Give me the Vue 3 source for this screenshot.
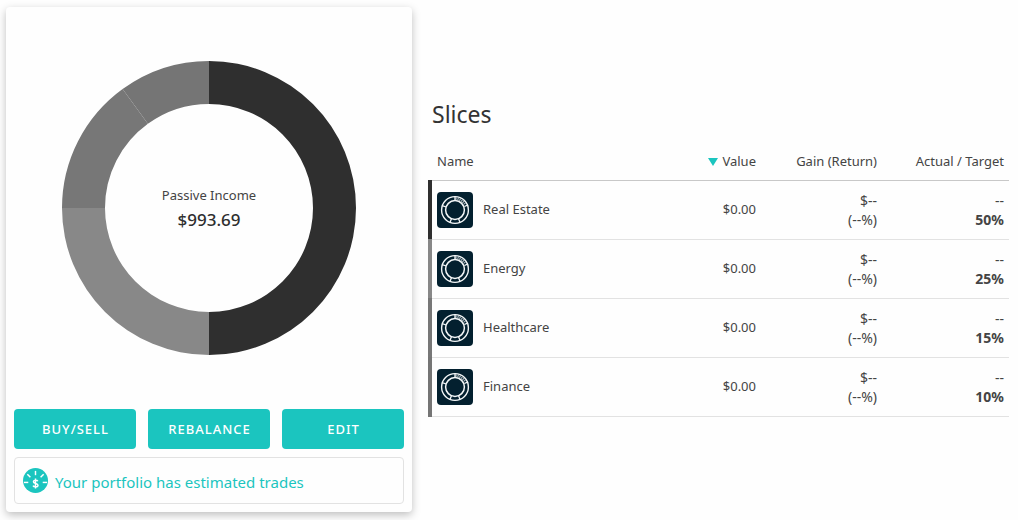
<script setup>
const slices = [
  { name: 'Real Estate', target: 50, tone: 'tone-a' },
  { name: 'Energy', target: 25, tone: 'tone-b' },
  { name: 'Healthcare', target: 15, tone: 'tone-c' },
  { name: 'Finance', target: 10, tone: 'tone-d' },
]

const OUTER = 147
const INNER = 104

function point(radius, share) {
  const angle = (share / 100) * Math.PI * 2
  return `${(Math.sin(angle) * radius).toFixed(2)} ${(-Math.cos(angle) * radius).toFixed(2)}`
}

let start = 0
const arcs = slices.map((slice) => {
  const from = start
  const to = start + slice.target
  start = to
  return {
    tone: slice.tone,
    d: `M${point(OUTER, from)}A${OUTER} ${OUTER} 0 0 1 ${point(OUTER, to)}L${point(INNER, to)}A${INNER} ${INNER} 0 0 0 ${point(INNER, from)}Z`,
  }
})

const actions = ['BUY/SELL', 'REBALANCE', 'EDIT']
const rays = [-90, -45, 0, 45, 90]
</script>

<template>
  <main class="page">
    <section class="card">
      <div class="chart">
        <svg class="donut" viewBox="-147 -147 294 294" aria-hidden="true">
          <path v-for="arc in arcs" :key="arc.tone" :class="arc.tone" :d="arc.d" />
        </svg>
        <div class="center">
          <span class="center-label">Passive Income</span>
          <strong class="center-value">$993.69</strong>
        </div>
      </div>
      <div class="actions">
        <button v-for="action in actions" :key="action" type="button">{{ action }}</button>
      </div>
      <a class="notice" href="#">
        <svg class="notice-icon" viewBox="0 0 26 26" aria-hidden="true">
          <circle cx="13" cy="13" r="13" fill="#1bc5bf" />
          <g stroke="#fff" stroke-width="1.5">
            <path v-for="ray in rays" :key="ray" d="M13 3V7.5" :transform="`rotate(${ray} 13 15)`" />
          </g>
          <path d="M15.4 13.8C14.8 12.4 10.8 12.2 10.8 14.4C10.8 16.6 15.6 15.6 15.6 17.9C15.6 20.1 11.2 20 10.4 18.4M13 11V21.4" fill="none" stroke="#fff" stroke-width="1.5" />
        </svg>
        <span>Your portfolio has estimated trades</span>
      </a>
    </section>

    <section class="slices">
      <h1>Slices</h1>
      <table>
        <thead>
          <tr>
            <th class="col-name">Name</th>
            <th class="col-value">
              <svg class="sort" viewBox="0 0 10 8" aria-hidden="true"><path d="M0 0H10L5 8Z" fill="#1bc5bf" /></svg>Value
            </th>
            <th class="col-gain">Gain (Return)</th>
            <th class="col-target">Actual / Target</th>
          </tr>
        </thead>
        <tbody>
          <tr v-for="slice in slices" :key="slice.name">
            <td class="name-cell">
              <span class="bar" :class="slice.tone"></span>
              <div class="name">
                <svg class="pie-icon" viewBox="0 0 36 36" aria-hidden="true">
                  <rect width="36" height="36" rx="4" fill="#03202f" />
                  <g fill="none" stroke="#f4f7f8">
                    <circle cx="18" cy="18" r="13.4" stroke-width="1.4" />
                    <circle cx="18" cy="18" r="9.4" stroke-width="1.5" />
                    <path d="M5.2 13.7L9.2 15M13 30.4L14.4 26.7M23 30.4L21.6 26.7M27.4 14.5L31 12.8M18 4.5V8.5" stroke-width="1.3" />
                    <path d="M18.5 6.6A11.4 11.4 0 0 1 28 12.5" stroke-width="2.4" stroke-dasharray="1.2 0.8" opacity="0.7" />
                  </g>
                </svg>
                {{ slice.name }}
              </div>
            </td>
            <td>$0.00</td>
            <td class="stacked">$--<br />(--%)</td>
            <td class="stacked">--<br /><strong>{{ slice.target }}%</strong></td>
          </tr>
        </tbody>
      </table>
    </section>
  </main>
</template>

<style>
body {
  margin: 0;
  background: #fefefe;
}
</style>

<style scoped>
.page {
  display: grid;
  grid-template-columns: 406fr 581fr;
  gap: 16px;
  align-items: center;
  padding: 7px 9px 8px 6px;
  font-family: "Segoe UI", "Noto Sans", "Open Sans", sans-serif;
  font-size: 13px;
  color: #444;
}
.card {
  box-sizing: border-box;
  padding: 8px;
  border-radius: 4px;
  background: #fefefe;
  box-shadow: 0 3px 8px rgba(0, 0, 0, 0.25);
}
.chart {
  display: grid;
  justify-items: center;
  align-items: center;
  padding: 46px 0 54px;
}
.donut,
.center {
  grid-area: 1 / 1;
}
.donut {
  display: block;
  width: 100%;
  max-width: 294px;
}
.center {
  display: flex;
  flex-direction: column;
  align-items: center;
}
.center-label {
  line-height: 24px;
}
.center-value {
  font-size: 17px;
  font-weight: 500;
  line-height: 26px;
  color: #2e2e2e;
}
.tone-a {
  fill: #2f2f2f;
  background: #2f2f2f;
}
.tone-b {
  fill: #888;
  background: #888;
}
.tone-c {
  fill: #777;
  background: #777;
}
.tone-d {
  fill: #757575;
  background: #757575;
}
.actions {
  display: grid;
  grid-template-columns: repeat(3, 1fr);
  gap: 12px;
}
.actions button {
  height: 40px;
  padding: 0 0 0 1px;
  border: 0;
  border-radius: 4px;
  background: #1bc5bf;
  color: #fff;
  font: 500 13px "Segoe UI", "Noto Sans", "Open Sans", sans-serif;
  letter-spacing: 1px;
}
.notice {
  display: flex;
  align-items: center;
  gap: 7px;
  margin-top: 8px;
  padding: 10px 8px;
  border: 1px solid #e2e2e2;
  border-radius: 4px;
  color: #1bc5bf;
  font-size: 15px;
  line-height: 25px;
  text-decoration: none;
}
.notice span {
  padding-top: 4px;
  line-height: 21px;
}
.notice-icon {
  width: 25px;
  height: 25px;
}
.slices {
  padding-bottom: 5px;
}
h1 {
  margin: 0 0 13px 4px;
  font-size: 23px;
  font-weight: 400;
  line-height: 32px;
  color: #333;
}
table {
  width: 100%;
  table-layout: fixed;
  border-collapse: separate;
  border-spacing: 0;
}
th,
td {
  padding: 0 5px;
  text-align: right;
  line-height: 19px;
}
th {
  height: 37px;
  border-bottom: 1px solid #c8c8c8;
  font-weight: 400;
}
td {
  height: 58px;
  border-bottom: 1px solid #e2e2e2;
}
.col-name {
  padding-left: 9px;
  text-align: left;
}
.col-value {
  width: 92px;
}
.col-gain {
  width: 111px;
}
.col-target {
  width: 117px;
}
.sort {
  width: 10px;
  height: 8px;
  margin-right: 4px;
}
.name-cell {
  position: relative;
  padding-left: 9px;
}
.bar {
  position: absolute;
  top: -1px;
  bottom: -1px;
  left: 0;
  width: 4px;
}
.name {
  display: flex;
  align-items: center;
  gap: 10px;
}
.pie-icon {
  width: 36px;
  height: 36px;
}
.stacked {
  font-size: 14px;
}
td strong {
  font-weight: 700;
}
</style>
